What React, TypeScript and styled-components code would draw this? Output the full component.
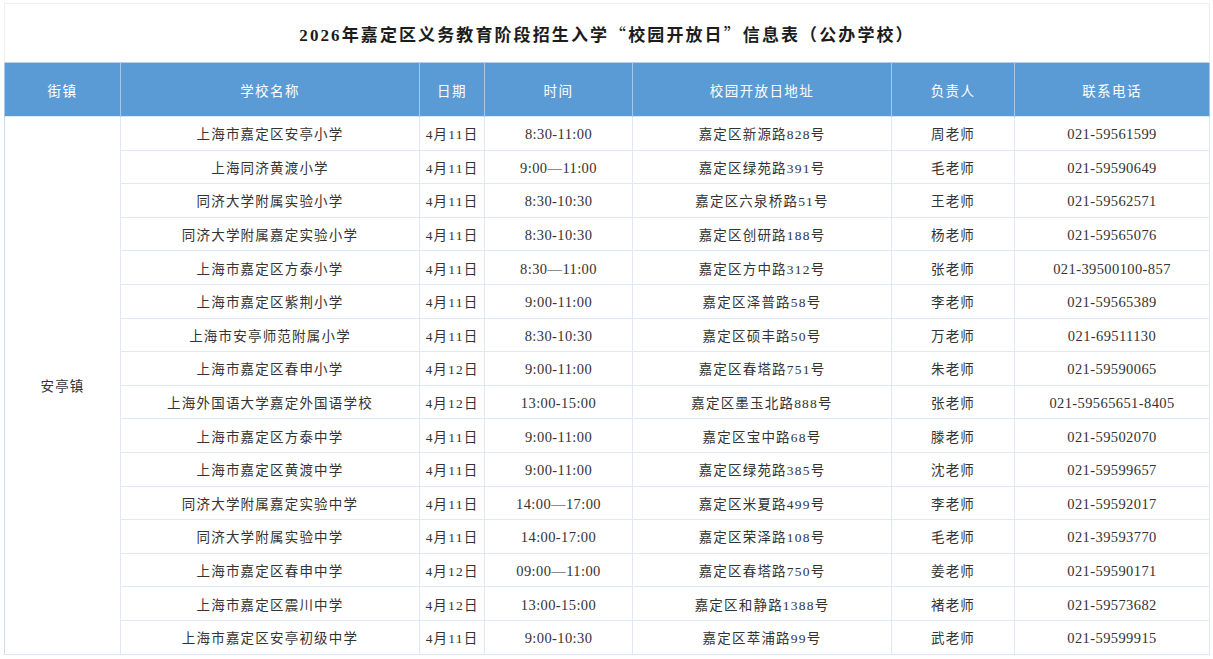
import styled, { createGlobalStyle } from 'styled-components'

const GlobalStyle = createGlobalStyle`
  html, body {
    margin: 0;
    padding: 0;
    background: #ffffff;
  }
  body {
    font-family: "Liberation Serif", "Noto Sans CJK SC", serif;
  }
`

const Page = styled.div`
  padding: 3px 4px 4px 4px;
  background: #ffffff;
`

const Table = styled.table`
  width: 1205px;
  table-layout: fixed;
  border-collapse: collapse;
  border: 1px solid #dce6f1;
`

const TitleCell = styled.th`
  height: 58px;
  padding: 0;
  text-align: center;
  vertical-align: middle;
  font-size: 17px;
  font-weight: 700;
  letter-spacing: 2.1px;
  color: #1c1c1c;
  background: #ffffff;
  border: 1px solid #eceff2;
  border-bottom: none;
`

// full-width quote marks as in the CJK source font
const Quote = styled.span`
  font-family: "Noto Sans CJK SC", sans-serif;
  font-weight: 400;
`

const HeadRow = styled.tr`
  background: #5b9bd5;
`

const HeadCell = styled.th`
  height: 53px;
  padding: 0;
  text-align: center;
  vertical-align: middle;
  font-size: 13.5px;
  font-weight: 400;
  letter-spacing: 1.4px;
  color: #ffffff;
  border-left: 1px solid #a8c8ea;
  border-right: 1px solid #a8c8ea;
  border-top: 1px solid #b7d1ee;
`

const Cell = styled.td<{ $num?: boolean }>`
  height: ${(p) => (p.$num ? '29.6px' : '32.6px')};
  padding: ${(p) => (p.$num ? '3px 0 0' : '0')};
  text-align: center;
  vertical-align: middle;
  font-size: ${(p) => (p.$num ? '14.5px' : '13.5px')};
  letter-spacing: ${(p) => (p.$num ? '0.4px' : '1.2px')};
  color: #333333;
  border: 1px solid #dde9f6;
  white-space: nowrap;
`

const TownCell = styled(Cell)`
  border-left: 1px solid #cadcef;
`

const widths = [116, 299, 65, 148, 259, 123, 195]

const headers = ['街镇', '学校名称', '日期', '时间', '校园开放日地址', '负责人', '联系电话']

type Row = [string, string, string, string, string, string]

const rows: Row[] = [
  ['上海市嘉定区安亭小学', '4月11日', '8:30-11:00', '嘉定区新源路828号', '周老师', '021-59561599'],
  ['上海同济黄渡小学', '4月11日', '9:00—11:00', '嘉定区绿苑路391号', '毛老师', '021-59590649'],
  ['同济大学附属实验小学', '4月11日', '8:30-10:30', '嘉定区六泉桥路51号', '王老师', '021-59562571'],
  ['同济大学附属嘉定实验小学', '4月11日', '8:30-10:30', '嘉定区创研路188号', '杨老师', '021-59565076'],
  ['上海市嘉定区方泰小学', '4月11日', '8:30—11:00', '嘉定区方中路312号', '张老师', '021-39500100-857'],
  ['上海市嘉定区紫荆小学', '4月11日', '9:00-11:00', '嘉定区泽普路58号', '李老师', '021-59565389'],
  ['上海市安亭师范附属小学', '4月11日', '8:30-10:30', '嘉定区硕丰路50号', '万老师', '021-69511130'],
  ['上海市嘉定区春申小学', '4月12日', '9:00-11:00', '嘉定区春塔路751号', '朱老师', '021-59590065'],
  ['上海外国语大学嘉定外国语学校', '4月12日', '13:00-15:00', '嘉定区墨玉北路888号', '张老师', '021-59565651-8405'],
  ['上海市嘉定区方泰中学', '4月11日', '9:00-11:00', '嘉定区宝中路68号', '滕老师', '021-59502070'],
  ['上海市嘉定区黄渡中学', '4月11日', '9:00-11:00', '嘉定区绿苑路385号', '沈老师', '021-59599657'],
  ['同济大学附属嘉定实验中学', '4月11日', '14:00—17:00', '嘉定区米夏路499号', '李老师', '021-59592017'],
  ['同济大学附属实验中学', '4月11日', '14:00-17:00', '嘉定区荣泽路108号', '毛老师', '021-39593770'],
  ['上海市嘉定区春申中学', '4月12日', '09:00—11:00', '嘉定区春塔路750号', '姜老师', '021-59590171'],
  ['上海市嘉定区震川中学', '4月12日', '13:00-15:00', '嘉定区和静路1388号', '褚老师', '021-59573682'],
  ['上海市嘉定区安亭初级中学', '4月11日', '9:00-10:30', '嘉定区萃浦路99号', '武老师', '021-59599915'],
]

export default function App() {
  return (
    <Page>
      <GlobalStyle />
      <Table>
        <colgroup>
          {widths.map((w, i) => (
            <col key={i} style={{ width: w }} />
          ))}
        </colgroup>
        <thead>
          <tr>
            <TitleCell colSpan={7}>
              2026年嘉定区义务教育阶段招生入学<Quote>“</Quote>校园开放日<Quote>”</Quote>信息表（公办学校）
            </TitleCell>
          </tr>
          <HeadRow>
            {headers.map((h) => (
              <HeadCell key={h}>{h}</HeadCell>
            ))}
          </HeadRow>
        </thead>
        <tbody>
          {rows.map((r, i) => (
            <tr key={i}>
              {i === 0 && <TownCell rowSpan={rows.length}>安亭镇</TownCell>}
              <Cell>{r[0]}</Cell>
              <Cell>{r[1]}</Cell>
              <Cell $num>{r[2]}</Cell>
              <Cell>{r[3]}</Cell>
              <Cell>{r[4]}</Cell>
              <Cell $num>{r[5]}</Cell>
            </tr>
          ))}
        </tbody>
      </Table>
    </Page>
  )
}
